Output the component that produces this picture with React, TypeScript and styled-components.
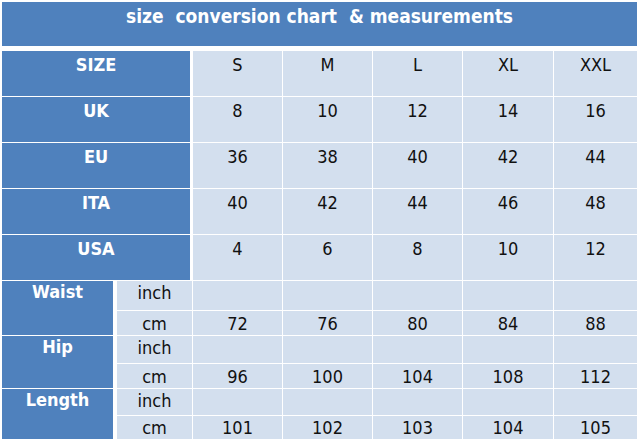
import React from 'react';
import styled, { createGlobalStyle } from 'styled-components';

const GlobalStyle = createGlobalStyle`
  html, body {
    margin: 0;
    padding: 0;
    background: #ffffff;
  }
  body {
    font-family: "DejaVu Sans Condensed", "DejaVu Sans", Verdana, sans-serif;
    font-stretch: condensed;
  }
`;

const BLUE = '#4f81bd';
const LIGHT = '#d3dfee';

const sizes = ['S', 'M', 'L', 'XL', 'XXL'];

const conversions = [
  { label: 'UK', values: ['8', '10', '12', '14', '16'] },
  { label: 'EU', values: ['36', '38', '40', '42', '44'] },
  { label: 'ITA', values: ['40', '42', '44', '46', '48'] },
  { label: 'USA', values: ['4', '6', '8', '10', '12'] },
];

const measurements = [
  { label: 'Waist', cm: ['72', '76', '80', '84', '88'] },
  { label: 'Hip', cm: ['96', '100', '104', '108', '112'] },
  { label: 'Length', cm: ['101', '102', '103', '104', '105'] },
];

export default function App() {
  return (
    <React.Fragment>
      <GlobalStyle />
      <Page>
        <TitleBar>{'size  conversion chart  & measurements'}</TitleBar>

        <TopGrid>
          <HeadCell>SIZE</HeadCell>
          {sizes.map((s) => (
            <DataCell key={s}>{s}</DataCell>
          ))}
          {conversions.map((row) => (
            <React.Fragment key={row.label}>
              <HeadCell>{row.label}</HeadCell>
              {row.values.map((v, i) => (
                <DataCell key={i}>{v}</DataCell>
              ))}
            </React.Fragment>
          ))}
        </TopGrid>

        <BottomGrid>
          {measurements.map((m) => (
            <React.Fragment key={m.label}>
              <MeasureHead>{m.label}</MeasureHead>
              <UnitCell $top>inch</UnitCell>
              {sizes.map((s) => (
                <UnitCell key={s} $top />
              ))}
              <UnitCell>cm</UnitCell>
              {m.cm.map((v, i) => (
                <UnitCell key={i}>{v}</UnitCell>
              ))}
            </React.Fragment>
          ))}
        </BottomGrid>
      </Page>
    </React.Fragment>
  );
}

const Page = styled.div`
  width: 635px;
  padding: 2px 3px 0 2px;
  display: flex;
  flex-direction: column;
`;

const TitleBar = styled.div`
  height: 44px;
  margin-bottom: 5px;
  background: ${BLUE};
  color: #ffffff;
  font-weight: bold;
  font-size: 19px;
  line-height: 24px;
  padding-top: 2px;
  box-sizing: border-box;
  text-align: center;
  white-space: pre;
`;

const TopGrid = styled.div`
  display: grid;
  grid-template-columns: 190px 89px 89px 89px 90px 1fr;
  grid-template-rows: repeat(5, 45px);
  gap: 1px;
  margin-bottom: 1px;
`;

const HeadCell = styled.div`
  background: ${BLUE};
  color: #ffffff;
  font-weight: bold;
  font-size: 18px;
  line-height: 22px;
  padding-top: 3px;
  margin-right: 2px;
  text-align: center;
`;

const DataCell = styled.div`
  background: ${LIGHT};
  color: #111111;
  font-size: 18px;
  line-height: 22px;
  padding-top: 3px;
  text-align: center;
`;

const BottomGrid = styled.div`
  display: grid;
  grid-template-columns: 114px 75px 89px 89px 89px 90px 1fr;
  grid-template-rows: 29px 24px 27px 24px 26px 23px;
  gap: 1px;
`;

const MeasureHead = styled.div`
  grid-row: span 2;
  background: ${BLUE};
  color: #ffffff;
  font-weight: bold;
  font-size: 18px;
  line-height: 22px;
  padding-top: 0;
  margin-right: 3px;
  text-align: center;
`;

const UnitCell = styled.div<{ $top?: boolean }>`
  background: ${LIGHT};
  color: #111111;
  font-size: 18px;
  line-height: 21px;
  display: flex;
  justify-content: center;
  align-items: ${(p) => (p.$top ? 'flex-start' : 'flex-end')};
  padding-top: ${(p) => (p.$top ? '1px' : '0')};
  padding-bottom: ${(p) => (p.$top ? '0' : '1px')};
`;
